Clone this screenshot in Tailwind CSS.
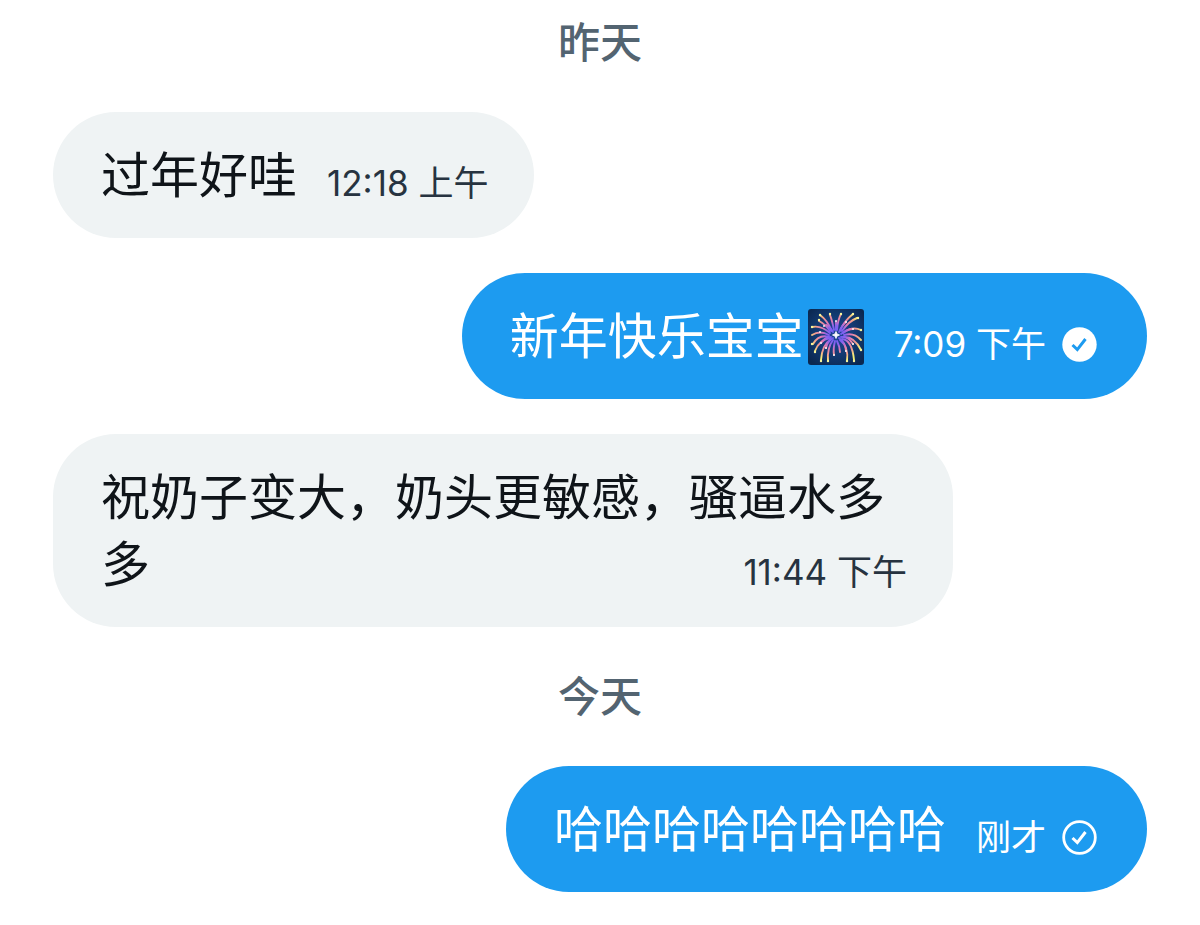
<!DOCTYPE html>
<html lang="zh-CN">
<head>
<meta charset="utf-8">
<meta name="viewport" content="width=device-width, initial-scale=1">
<title>私信</title>
<script src="https://cdn.jsdelivr.net/npm/@tailwindcss/browser@4"></script>
</head>
<body class="bg-white text-[#0f1419] font-['Inter','Noto_Sans_CJK_SC',sans-serif]">
<main class="flex flex-col px-[53px] pt-[13px] pb-8">
  <h2 class="text-center text-[42px] leading-[60px] font-medium text-[#536471]">昨天</h2>

  <div class="mt-[39px] max-w-[900px] self-start rounded-[63px] bg-[#eff3f4] pl-12 pr-[46px] pt-[30px] pb-[29px]">
    <p class="flow-root text-[49px] leading-[67px]">过年好哇<time class="float-right ml-[30px] mt-4 text-[35px] leading-[51px] text-[#273340]">12:18 上午</time></p>
  </div>

  <div class="mt-[35px] max-w-[900px] self-end rounded-[63px] bg-[#1d9bf0] pl-12 pr-[50px] pt-[30px] pb-[29px] text-white">
    <p class="flow-root text-[49px] leading-[67px]">新年快乐宝宝<svg role="img" aria-label="烟花" class="ml-1 inline-block size-14 align-[-11px]" viewBox="0 0 56 56" fill="none">
        <defs>
          <radialGradient id="sky" cx="28" cy="26" r="36" gradientUnits="userSpaceOnUse"><stop offset="0" stop-color="#23469a"/><stop offset=".55" stop-color="#123a72"/><stop offset="1" stop-color="#0b2850"/></radialGradient>
          <radialGradient id="spark" cx="28" cy="26" r="27" gradientUnits="userSpaceOnUse"><stop offset="0" stop-color="#5b5df5"/><stop offset=".35" stop-color="#8a62ee"/><stop offset=".55" stop-color="#e07ab4"/><stop offset=".8" stop-color="#f2a08c"/><stop offset="1" stop-color="#f4ef78"/></radialGradient>
        </defs>
        <rect width="56" height="56" rx="3" fill="url(#sky)"/>
        <g stroke="url(#spark)" stroke-width="1.9" stroke-linecap="round">
          <path d="M26 21Q24 11 22 6M29 21Q30 10 33 5M24 22Q19 11 12 6M32 22Q36 12 45 5M22 22Q17 15 11 12M34 22Q41 12 49 9M22 24Q13 16 4 18M35 24Q44 17 53 21M21 26Q12 21 4 26M36 26Q46 23 53 31M21 28Q11 25 5 35M35 28Q46 27 53 41M22 29Q11 31 7 42M34 30Q44 31 46 51M23 30Q14 36 13 51M32 31Q41 38 39 52M25 31Q19 39 20 52M27 32Q25 40 26 46"/>
          <path d="M25 23Q21 17 18 16M31 23Q34 16 38 13M33 25Q39 20 45 20M23 28Q17 28 13 34M33 28Q40 27 45 35M25 29Q19 33 18 39M31 29Q38 34 38 42M28 21V13M29 32Q32 38 32 43"/>
        </g>
        <g stroke="#f7f49a" stroke-width="2.400" stroke-linecap="round">
          <path d="M12 6h.01M22 5h.01M33 5h.01M45 5h.01M50 9h.01M11 11h.01M4 18h.01M53 21h.01M4 35h.01M53 41h.01M7 43h.01M13 52h.01M20 52h.01M46 52h.01M39 52h.01"/>
        </g>
        <g stroke="#fff" stroke-width="1.800" stroke-linecap="round">
          <path d="M16 17h.01M38 13h.01M28 12h.01M45 20h.01M12 23h.01M13 34h.01M18 39h.01M45 35h.01M38 42h.01M26 46h.01"/>
        </g>
        <path d="M28 22.500l1 2.500 2.500 1-2.500 1-1 2.500-1-2.500-2.500-1 2.500-1z" fill="#fff" stroke="#fff" stroke-width=".8"/>
      </svg><span class="float-right ml-[30px] mt-4 flex items-center gap-4 text-[35px] leading-[51px]"><time>7:09 下午</time><svg role="img" aria-label="已读" class="size-[35px]" viewBox="0 0 35 35" fill="none"><circle cx="17.500" cy="17.500" r="17.200" fill="#fff"/><path d="M10.500 18l4.800 4.600L23.500 12" stroke="#1d9bf0" stroke-width="3"/></svg></span></p>
  </div>

  <div class="mt-[35px] max-w-[900px] self-start rounded-[63px] bg-[#eff3f4] pl-12 pr-[46px] pt-[30px] pb-[29px]">
    <p class="flow-root text-[49px] leading-[67px]">祝奶子变大，奶头更敏感，骚逼水多多<time class="float-right ml-[30px] mt-4 text-[35px] leading-[51px] text-[#273340]">11:44 下午</time></p>
  </div>

  <h2 class="mt-10 text-center text-[42px] leading-[60px] font-medium text-[#536471]">今天</h2>

  <div class="mt-[39px] max-w-[900px] self-end rounded-[63px] bg-[#1d9bf0] pl-12 pr-[50px] pt-[30px] pb-[29px] text-white">
    <p class="flow-root text-[49px] leading-[67px]">哈哈哈哈哈哈哈哈<span class="float-right ml-[30px] mt-4 flex items-center gap-4 text-[35px] leading-[51px]"><time>刚才</time><svg role="img" aria-label="已发送" class="size-[35px]" viewBox="0 0 35 35" fill="none"><circle cx="17.500" cy="17.500" r="15.800" stroke="#fff" stroke-width="2.800"/><path d="M10.500 18l4.800 4.600L23.500 12" stroke="#fff" stroke-width="3"/></svg></span></p>
  </div>
</main>
</body>
</html>
